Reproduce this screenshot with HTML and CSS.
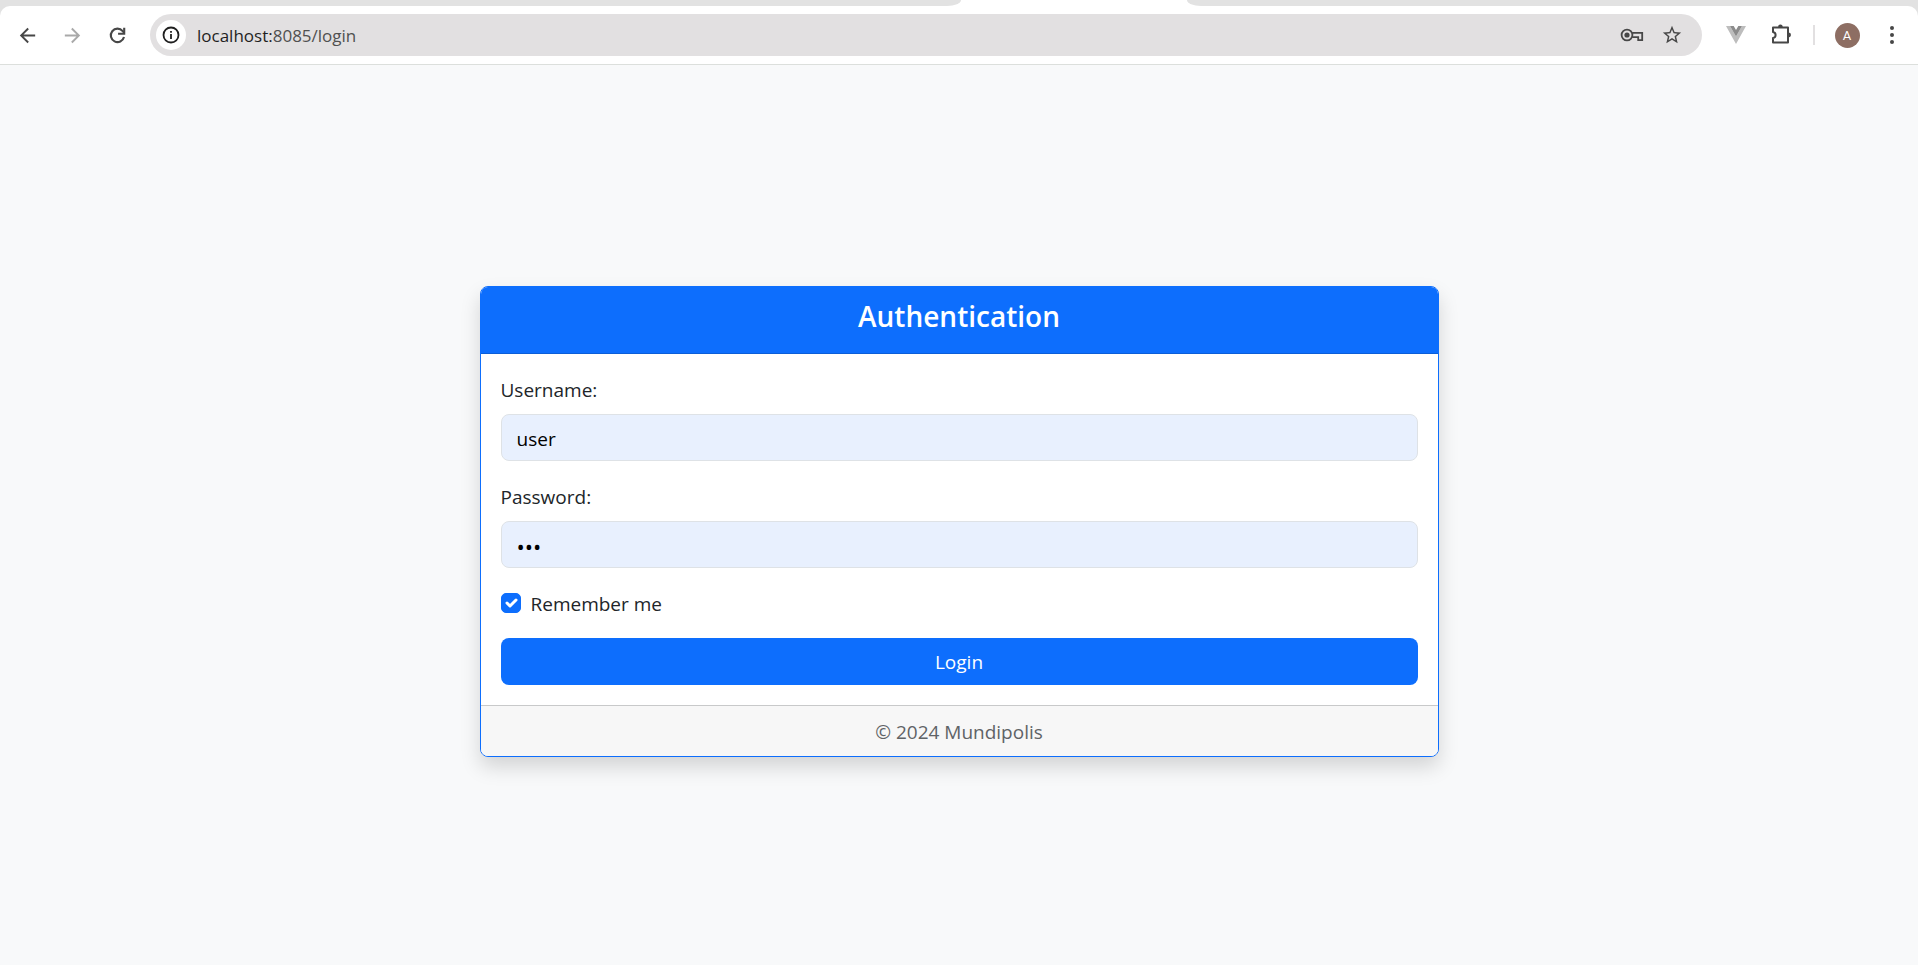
FILE: index.html
```html
<!DOCTYPE html>
<html lang="en">
<head>
<meta charset="utf-8">
<title>Authentication</title>
<link rel="stylesheet" href="styles.css">
</head>
<body>
<header class="browser">
  <div class="tabstrip"><span class="tab-left"></span><span class="tab-active"></span><span class="tab-right"></span></div>
  <div class="toolbar">
    <button class="tool" type="button" aria-label="Back"><svg width="23" height="23" viewBox="0 0 24 24"><path fill="#474747" d="M20 10.9H7.83l5.59-5.49L12 4l-8 8 8 8 1.41-1.41L7.83 13.1H20z"/></svg></button>
    <button class="tool" type="button" aria-label="Forward"><svg width="23" height="23" viewBox="0 0 24 24"><path fill="#a9a9a9" d="M4 10.9h12.17l-5.59-5.49L12 4l8 8-8 8-1.41-1.41 5.58-5.49H4z"/></svg></button>
    <button class="tool" type="button" aria-label="Reload"><svg width="23" height="23" viewBox="0 0 24 24" fill="none" stroke="#474747" stroke-width="2.2"><path d="M18.8 13.6A7 7 0 1 1 17.4 7.4L19 9.2"/><path d="M19 4v6.2h-6.4"/></svg></button>
    <div class="omnibox">
      <button class="site-info" type="button" aria-label="Site information"><svg width="18" height="18" viewBox="0 0 18 18"><circle cx="9" cy="9" r="7.5" fill="none" stroke="#1f1f1f" stroke-width="1.8"/><path fill="#1f1f1f" d="M8.1 8h1.8v5H8.1zM8.1 5h1.8v1.8H8.1z"/></svg></button>
      <div class="url"><span class="host">localhost:</span>8085/login</div>
      <button class="tool" type="button" aria-label="Passwords"><svg width="24" height="16" viewBox="0 0 24 16" fill="none" stroke="#474747" stroke-width="1.8"><path d="M12.2 5.8H22.2V13.1H18.2V10.1H12.2"/><circle cx="7" cy="8" r="5.4"/><circle cx="7" cy="8" r="2.6" fill="#474747" stroke="none"/></svg></button>
      <button class="tool" type="button" aria-label="Bookmark"><svg width="22" height="22" viewBox="0 0 24 24"><path fill="#474747" d="M22 9.24l-7.19-.62L12 2 9.19 8.63 2 9.24l5.46 4.73L5.82 21 12 17.27 18.18 21l-1.63-7.03zM12 15.4l-3.76 2.27 1-4.28-3.32-2.88 4.38-.38L12 6.1l1.71 4.04 4.38.38-3.32 2.88 1 4.28z"/></svg></button>
    </div>
    <button class="tool extension" type="button" aria-label="Vue devtools"><svg width="20" height="18" viewBox="0 0 20 18"><path fill="#bdbdbd" d="M0 0h4l6 10.4L16 0h4L10 18z"/><path fill="#8b8b8b" d="M4 0h3.7L10 4l2.3-4H16l-6 10.4z"/></svg></button>
    <button class="tool" type="button" aria-label="Extensions"><svg width="24" height="24" viewBox="0 0 24 24"><path fill="none" stroke="#474747" stroke-width="2" stroke-linejoin="round" d="M4 4.5h15v15H4v-4.4c1.7-.3 2.6-1.5 2.6-3.1S5.700 9.200 4 8.900z"/><path fill="#474747" d="M9 4.500a2.400 2.900 0 0 1 4.800 0zM19 9.600a2.900 2.400 0 0 1 0 4.800z"/></svg></button>
    <span class="divider"></span>
    <button class="tool" type="button" aria-label="Profile"><span class="avatar">A</span></button>
    <button class="tool" type="button" aria-label="Menu"><svg width="6" height="20" viewBox="0 0 6 20" fill="#474747"><circle cx="3" cy="3" r="2"/><circle cx="3" cy="10" r="2"/><circle cx="3" cy="17" r="2"/></svg></button>
  </div>
</header>
<main class="page">
  <section class="card">
    <div class="card-header"><h1 class="title">Authentication</h1></div>
    <form class="card-body">
      <div class="field">
        <label for="username">Username:</label>
        <input class="control" id="username" type="text" value="user">
      </div>
      <div class="field">
        <label for="password">Password:</label>
        <input class="control secret" id="password" type="password" value="123">
      </div>
      <div class="check">
        <span class="tick"><input id="remember" type="checkbox" checked><svg class="tick-mark" width="20" height="20" viewBox="0 0 20 20"><path fill="none" stroke="#fff" stroke-linecap="round" stroke-linejoin="round" stroke-width="3" d="M6 10l3 3 6-6"/></svg></span>
        <label for="remember">Remember me</label>
      </div>
      <button class="login" type="submit">Login</button>
    </form>
    <footer class="card-footer">© 2024 Mundipolis</footer>
  </section>
</main>
</body>
</html>
```
FILE: styles.css
```css
* { box-sizing: border-box; }

body {
  margin: 0;
  min-height: 100vh;
  display: flex;
  flex-direction: column;
  background: #f8f9fa;
  color: #212529;
  font: 19px/30px "Segoe UI", "Open Sans", "Noto Sans", sans-serif;
}

button, input { font: inherit; }

.browser { background: #e2e2e2; }

.tabstrip {
  display: grid;
  grid-template-columns: 961fr 226fr 731fr;
  height: 6px;
  background: #fff;
}
.tab-left, .tab-right { background: #e2e2e2; }
.tab-left { border-bottom-right-radius: 14px 6px; }
.tab-right { border-bottom-left-radius: 14px 6px; }

.toolbar {
  display: flex;
  align-items: center;
  gap: 9px;
  padding: 8px 8px 8px 9px;
  background: #fff;
  border-bottom: 1px solid #dcdfdc;
  border-radius: 10px 10px 0 0;
}

.tool {
  display: flex;
  align-items: center;
  justify-content: center;
  flex: none;
  width: 36px;
  height: 36px;
  padding: 0;
  border: 0;
  background: none;
}

.omnibox {
  flex: 1;
  display: flex;
  align-items: center;
  gap: 4px;
  height: 42px;
  margin-left: 6px;
  padding: 0 12px 0 6px;
  border-radius: 21px;
  background: #e2e0e1;
}

.site-info {
  display: flex;
  align-items: center;
  justify-content: center;
  width: 30px;
  height: 30px;
  padding: 0;
  border: 0;
  border-radius: 50%;
  background: #fff;
}

.url {
  flex: 1;
  padding: 2px 0 0 7px;
  color: #505050;
  font-size: 17px;
}
.host { color: #1f1f1f; }

.extension { margin-left: 7px; }

.divider {
  width: 2px;
  height: 20px;
  margin: 0 5px;
  background: #e2e0e1;
}

.avatar {
  width: 25px;
  height: 25px;
  border-radius: 50%;
  background: #8d6e63;
  color: #fff;
  font: 13px/25px Roboto, sans-serif;
  text-align: center;
}

.page {
  flex: 1;
  display: flex;
  align-items: center;
  justify-content: center;
  padding-top: 13px;
}

.card {
  width: 50%;
  border: 1px solid #0d6efd;
  border-radius: 8px;
  background: #fff;
  box-shadow: 0 10px 20px rgba(0, 0, 0, 0.15);
  overflow: hidden;
}

.card-header {
  padding: 11px 20px 19px;
  border-bottom: 1px solid #0b5ed7;
  background: #0d6efd;
  color: #fff;
  text-align: center;
}

.title {
  margin: 0;
  font-size: 28px;
  font-weight: 600;
  line-height: 36px;
}

.card-body {
  display: flex;
  flex-direction: column;
  gap: 20px;
  padding: 20px;
}

.field {
  display: flex;
  flex-direction: column;
  gap: 8px;
}

label { line-height: 32px; }

.control {
  width: 100%;
  padding: 9px 15px 7px;
  height: 47px;
  border: 1px solid #dee2e6;
  border-radius: 8px;
  background: #e8f0fe;
  color: #000;
}
.secret { font-size: 22px; }

.check {
  display: flex;
  gap: 10px;
  height: 30px;
}

.tick {
  display: grid;
  width: 20px;
  height: 20px;
  margin-top: 5px;
}
.tick input, .tick-mark { grid-area: 1 / 1; }
.tick input {
  appearance: none;
  width: 20px;
  height: 20px;
  margin: 0;
  border-radius: 5px;
  background: #fff;
  border: 1px solid #dee2e6;
}
.tick input:checked { background: #0d6efd; border-color: #0d6efd; }
.tick-mark { pointer-events: none; }

.login {
  height: 47px;
  padding: 0 15px;
  border: 0;
  border-radius: 8px;
  background: #0d6efd;
  color: #fff;
}

.card-footer {
  padding: 11px 20px 9px;
  border-top: 1px solid #c8c9ca;
  background: #f7f7f7;
  color: #5f6366;
  text-align: center;
}
```
